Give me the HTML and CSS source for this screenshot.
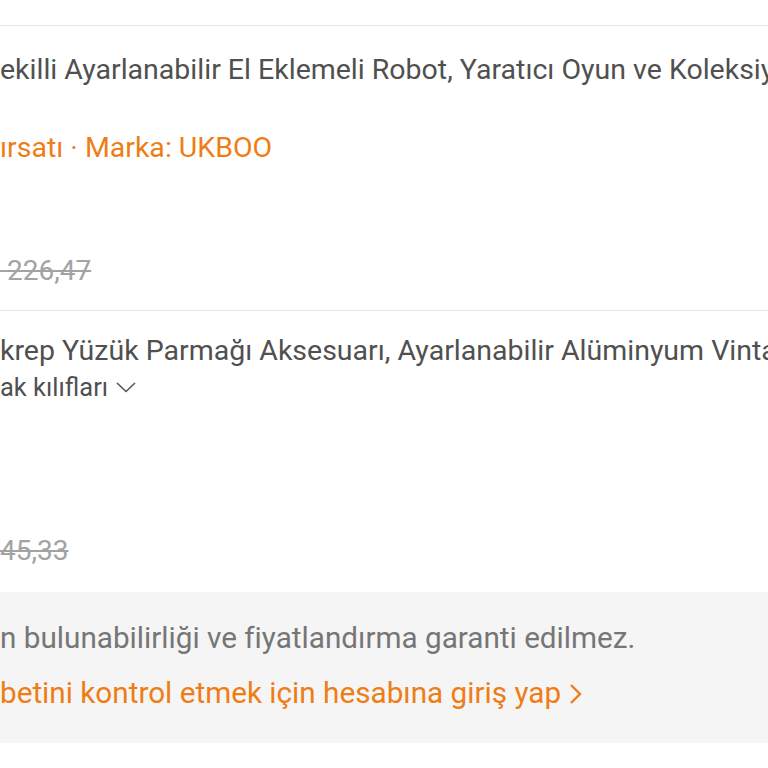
FILE: index.html
```html
<!DOCTYPE html>
<html lang="tr">
<head>
  <meta charset="UTF-8" />
  <meta name="viewport" content="width=device-width, initial-scale=1.0"/>
  <title>Sepet</title>
  <link rel="stylesheet" href="styles.css">
</head>
<body>

  <div class="page">

    <!-- ITEM 1 -->
    <div class="item item-robot">
      <p class="title">ekilli Ayarlanabilir El Eklemeli Robot, Yaratıcı Oyun ve Koleksiyon Figürü</p>
      <p class="meta">ırsatı · Marka: UKBOO</p>
      <p class="old-price">&nbsp;226,47</p>
    </div>

    <!-- ITEM 2 -->
    <div class="item item-ring">
      <p class="title">krep Yüzük Parmağı Aksesuarı, Ayarlanabilir Alüminyum Vintage Telefon Tutucu</p>
      <p class="variant">ak kılıfları<svg class="chev-down" width="20" height="11" viewBox="0 0 20 11">
          <path d="M1 1 L10 9.5 L19 1" fill="none" stroke="#555" stroke-width="1.6"/>
        </svg></p>
      <p class="old-price">45,33</p>
    </div>

    <!-- NOTICE -->
    <div class="notice">
      <p class="notice-text">n bulunabilirliği ve fiyatlandırma garanti edilmez.</p>
      <p class="notice-link">betini kontrol etmek için hesabına giriş yap<svg class="chev-right" width="13" height="22" viewBox="0 0 13 22">
          <path d="M2 2 L11 11 L2 20" fill="none" stroke="#ef7d15" stroke-width="2.4"/>
        </svg></p>
    </div>

  </div>

</body>
</html>
```

FILE: styles.css
```css
body {
  margin: 0;
  padding: 0;
  background: #fff;
  font-family: Roboto, "Noto Sans", sans-serif;
  overflow: hidden;
}

.page {
  padding-top: 25px;
}

p {
  margin: 0;
  font-size: 28.5px;
  line-height: 37px;
  white-space: nowrap;
}

.item {
  border-top: 1px solid #e4e4e4;
  display: flex;
  flex-direction: column;
}

.item-robot {
  padding: 25px 0 21px;
}

.item-ring {
  padding: 21px 0 23px;
}

.title {
  color: #505050;
}

.meta {
  color: #ef7d15;
  margin-top: 41px;
}

.variant {
  color: #505050;
  font-size: 25.5px;
}

.chev-down {
  margin-left: 8px;
  vertical-align: 3px;
}

.old-price {
  color: #a3a3a3;
  font-size: 28px;
  text-decoration: line-through;
  text-decoration-thickness: 2px;
}

.item-robot .old-price {
  margin-top: 86px;
}

.item-ring .old-price {
  margin-top: 126px;
}

.notice {
  background: #f5f5f5;
  padding: 27px 0 32px;
}

.notice-text,
.notice-link {
  font-size: 29.7px;
}

.notice-text {
  color: #767676;
}

.notice-link {
  color: #ef7d15;
  margin-top: 18px;
}

.chev-right {
  vertical-align: -2px;
  margin-left: 8px;
}
```
